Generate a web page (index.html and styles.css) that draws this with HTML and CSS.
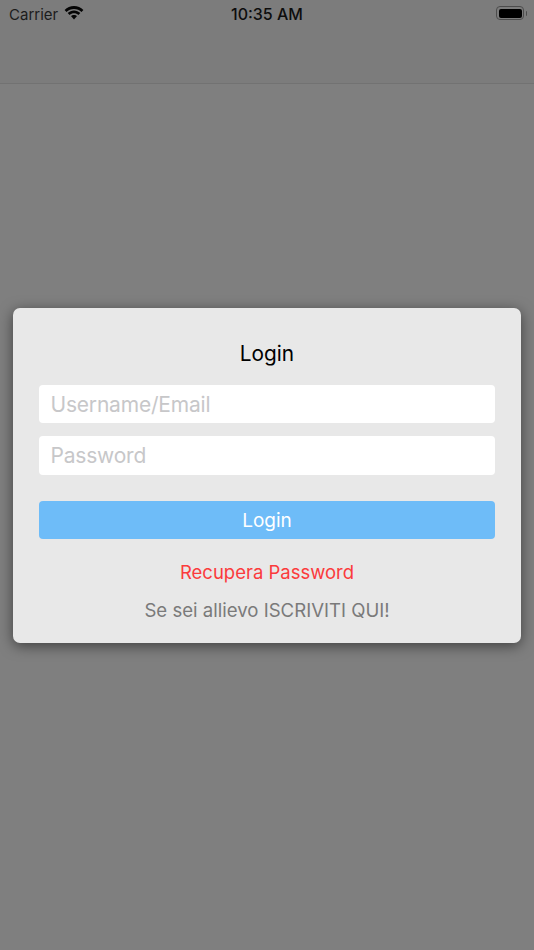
FILE: index.html
```html
<!DOCTYPE html>
<html lang="it">
<head>
<meta charset="utf-8">
<title>Login</title>
<link rel="stylesheet" href="styles.css">
</head>
<body>
<div class="screen">
  <header class="topbar">
    <div class="status">
      <div class="status-left">
        <span class="carrier">Carrier</span>
        <svg class="wifi" viewBox="0 0 20 14" width="20" height="14" aria-hidden="true">
          <path d="M10 2.900c2.900 0 5.500 1.100 7.500 3l1.900-2C16.900 1.500 13.600 0 10 0S3.100 1.500.6 3.900l1.900 2c2-1.900 4.600-3 7.500-3z"/>
          <path d="M10 7.200c1.700 0 3.200.6 4.400 1.700l1.900-2C14.600 5.400 12.400 4.400 10 4.400S5.400 5.400 3.700 6.900l1.900 2c1.200-1.100 2.700-1.700 4.400-1.700z"/>
          <path d="M10 8.900c-1.200 0-2.300.5-3.100 1.200L10 13.600l3.100-3.500C12.300 9.400 11.200 8.900 10 8.900z"/>
        </svg>
      </div>
      <span class="clock">10:35 AM</span>
      <div class="battery">
        <div class="battery-shell"><div class="battery-fill"></div></div>
        <div class="battery-cap"></div>
      </div>
    </div>
  </header>
  <div class="overlay">
    <form class="card">
      <h1 class="title">Login</h1>
      <div class="field">Username/Email</div>
      <div class="field field-second">Password</div>
      <div class="button">Login</div>
      <div class="recover">Recupera Password</div>
      <div class="signup">Se sei allievo ISCRIVITI QUI!</div>
    </form>
  </div>
</div>
</body>
</html>
```
FILE: styles.css
```css
* { box-sizing: border-box; }
html, body { margin: 0; padding: 0; }
body { font-family: Inter, "Liberation Sans", sans-serif; background: #7f7f7f; }
.screen { position: relative; width: 534px; height: 950px; overflow: hidden; background: #7f7f7f; }
.topbar { height: 84px; background: #7c7c7c; border-bottom: 1px solid #727272; }
.status { display: flex; align-items: center; justify-content: space-between; height: 28px; padding: 0 7px 0 9px; position: relative; color: #0d0d0d; }
.status-left { display: flex; align-items: center; gap: 6px; }
.carrier { font-size: 15px; color: #1c1c1c; }
.wifi { fill: #050505; margin-top: -3px; }
.clock { position: absolute; left: 0; right: 0; text-align: center; font-size: 16px; font-weight: 500; }
.battery { display: flex; align-items: center; gap: 1.500px; margin-top: -2px; }
.battery-shell { width: 28px; height: 14px; border: 1px solid #4c4c4c; border-radius: 4px; padding: 1.500px; }
.battery-fill { width: 100%; height: 100%; background: #000; border-radius: 2px; }
.battery-cap { width: 1.500px; height: 5px; background: #4c4c4c; border-radius: 0 1px 1px 0; }
.overlay { position: absolute; inset: 0; display: flex; align-items: center; justify-content: center; }
.card { width: 508px; height: 335px; background: #e8e8e8; border-radius: 7px; padding: 33px 26px 0; display: flex; flex-direction: column; box-shadow: 0 3px 14px rgba(0, 0, 0, .5); }
.title { margin: 0 0 18px; height: 26px; font-size: 20.800px; line-height: 26px; font-weight: 400; text-align: center; color: #000; }
.field { height: 38.500px; background: #fff; border-radius: 4px; padding: 0 11.500px; font-size: 21px; letter-spacing: -.2px; line-height: 39px; color: #c7c7c9; }
.field-second { margin-top: 13px; line-height: 40px; }
.button { height: 38.500px; margin-top: 26px; background: #6ebcf8; border-radius: 4px; color: #fff; font-size: 19px; line-height: 40px; text-align: center; }
.recover { margin-top: 21px; font-size: 18.500px; line-height: 24px; color: #fb3b3c; text-align: center; }
.signup { margin-top: 14px; font-size: 18.600px; line-height: 24px; color: #7a7a7a; text-align: center; }
```
